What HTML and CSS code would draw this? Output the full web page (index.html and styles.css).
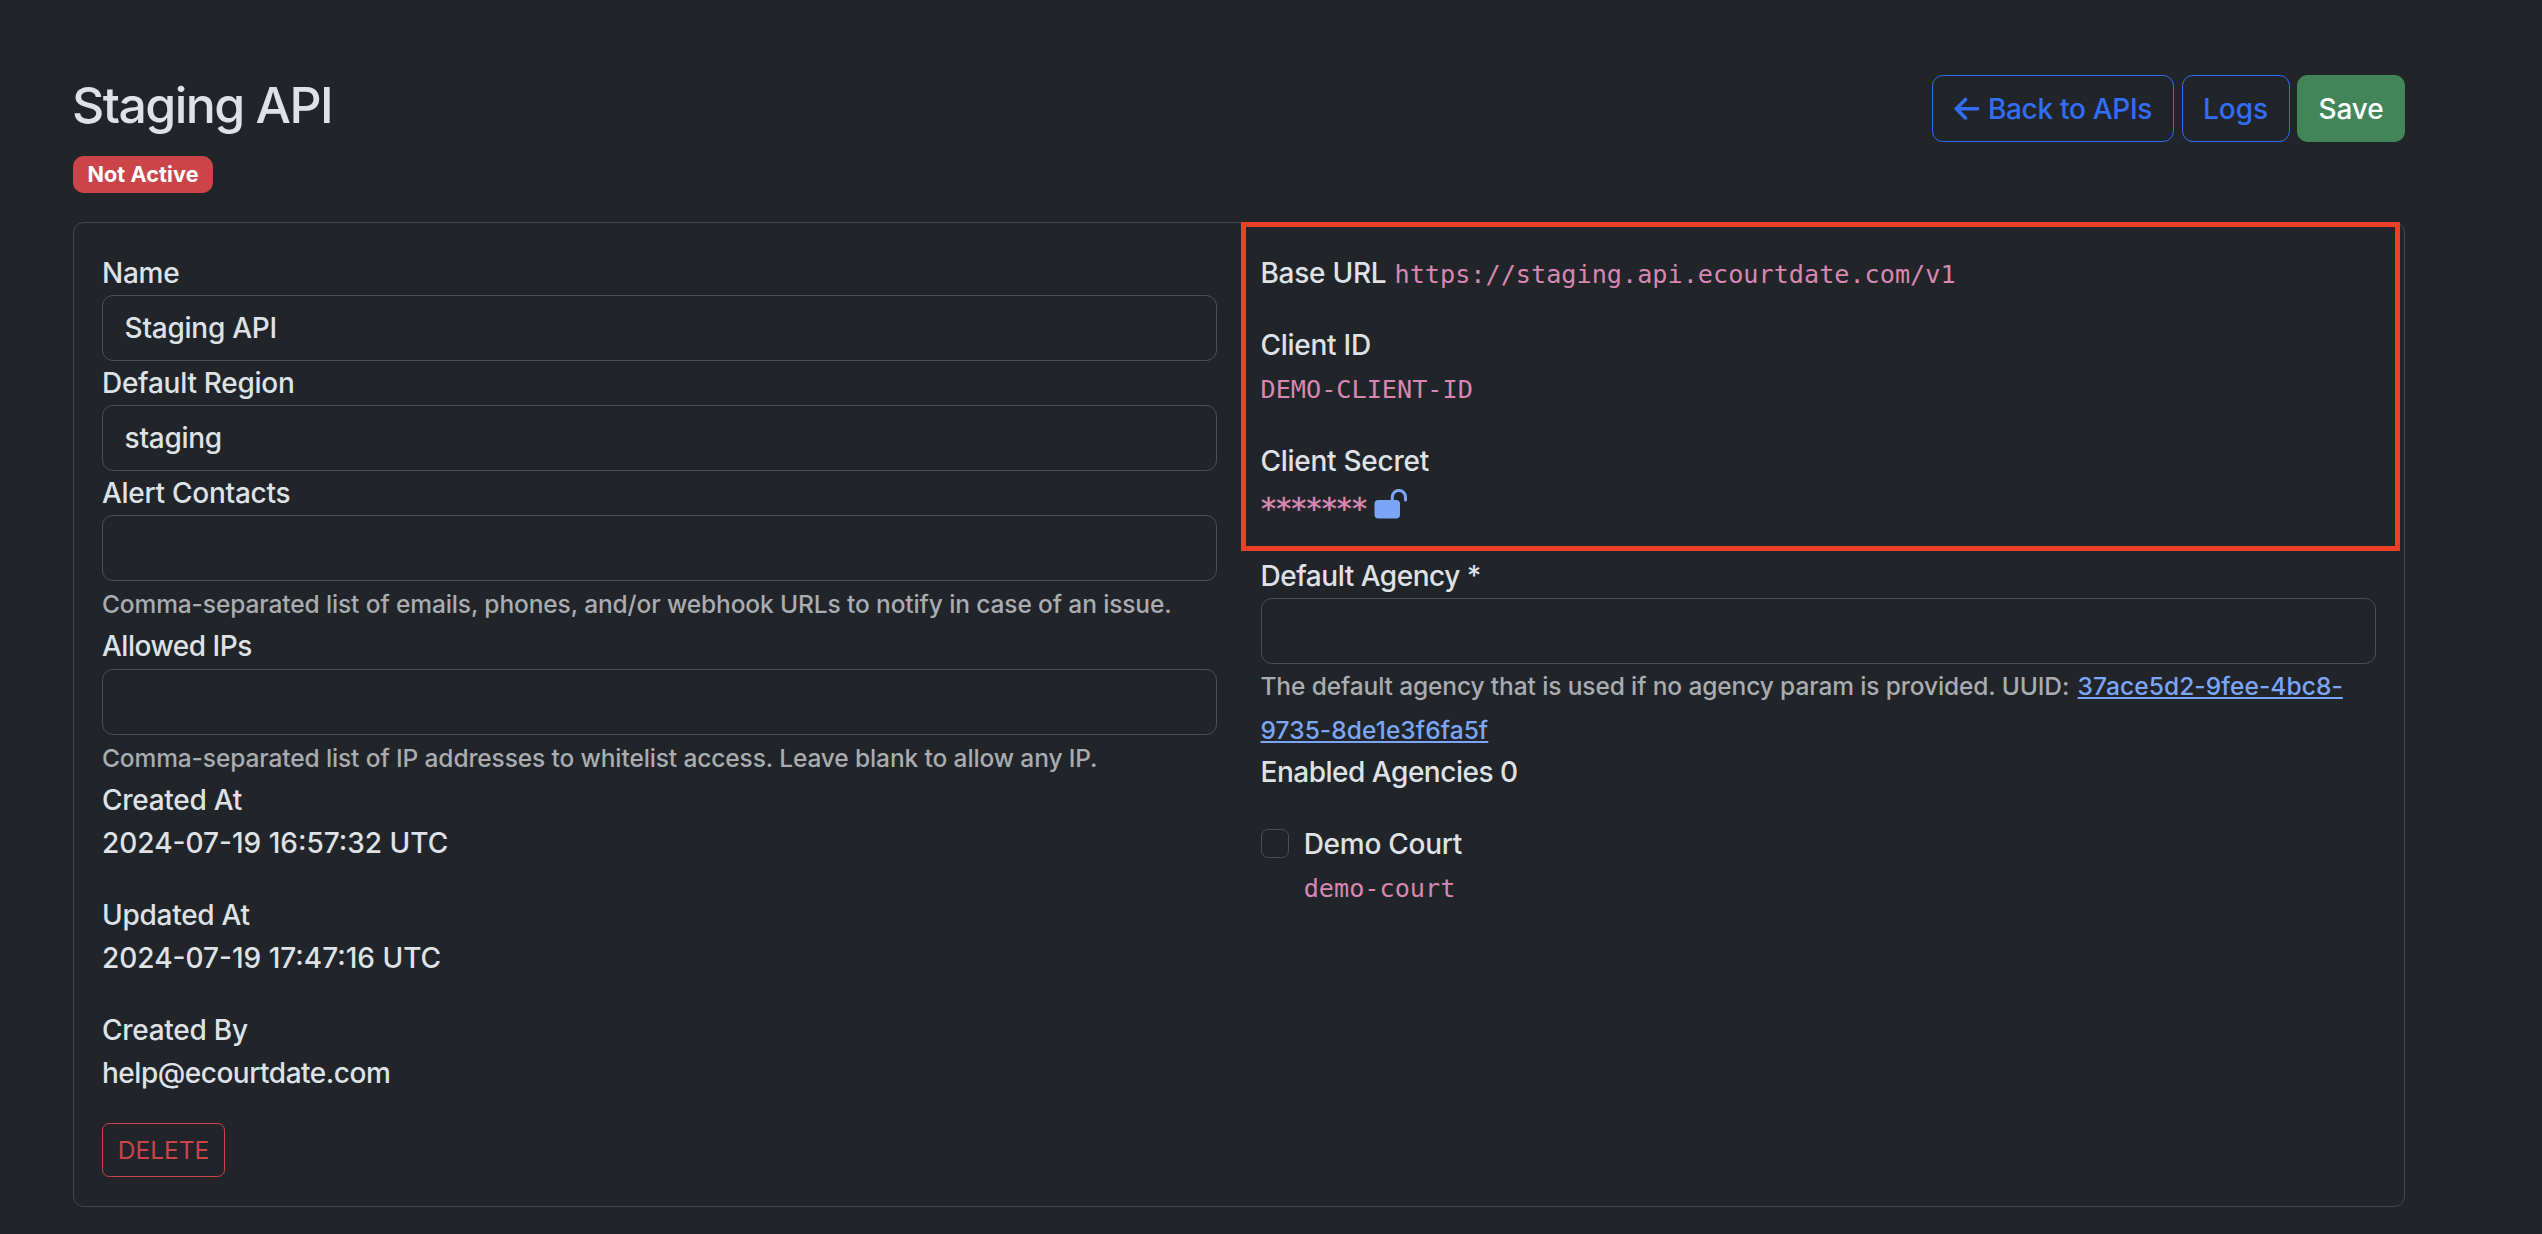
FILE: index.html
```html
<!DOCTYPE html>
<html lang="en">
<head>
<meta charset="utf-8">
<title>Staging API</title>
<link rel="stylesheet" href="styles.css">
</head>
<body>
<main class="page">
  <header class="header">
    <div>
      <h1 class="title">Staging API</h1>
      <span class="badge">Not Active</span>
    </div>
    <nav class="actions">
      <a class="btn btn-outline btn-back"><svg class="arrow" viewBox="0 0 26 24" fill="none" stroke="currentColor" stroke-width="3.6" stroke-linecap="round" stroke-linejoin="round"><path d="M11.5 2.5 2.3 11.7 11.5 20.9M2.5 11.7H23.6"/></svg><span class="tight">Back to APIs</span></a>
      <a class="btn btn-outline">Logs</a>
      <button class="btn btn-save">Save</button>
    </nav>
  </header>
  <section class="card">
    <div class="col col-left">
      <label class="line">Name</label>
      <div class="input">Staging API</div>
      <label class="line">Default Region</label>
      <div class="input">staging</div>
      <label class="line">Alert Contacts</label>
      <div class="input"></div>
      <div class="help">Comma-separated list of emails, phones, and/or webhook URLs to notify in case of an issue.</div>
      <label class="line tighter">Allowed IPs</label>
      <div class="input"></div>
      <div class="help">Comma-separated list of IP addresses to whitelist access. Leave blank to allow any IP.</div>
      <div class="group">
        <div class="line">Created At</div>
        <div class="line date">2024-07-19 16:57:32 UTC</div>
      </div>
      <div class="group">
        <div class="line">Updated At</div>
        <div class="line date">2024-07-19 17:47:16 UTC</div>
      </div>
      <div class="group">
        <div class="line">Created By</div>
        <div class="line tighter">help@ecourtdate.com</div>
      </div>
      <button class="btn-delete">DELETE</button>
    </div>
    <div class="col">
      <div class="group">
        <div class="line">Base URL <code class="url">https://staging.api.ecourtdate.com/v1</code></div>
      </div>
      <div class="group">
        <div class="line">Client ID</div>
        <div class="line"><code>DEMO-CLIENT-ID</code></div>
      </div>
      <div class="group">
        <div class="line nudge">Client Secret</div>
        <div class="line secret"><code class="stars">*******</code><svg class="lock" viewBox="0 0 34 30"><rect x="0.5" y="11" width="25.5" height="18.5" rx="4" fill="currentColor"/><path d="M18.3 12V8a6.6 6.6 0 0 1 13.2 0v3" fill="none" stroke="currentColor" stroke-width="3" stroke-linecap="round"/></svg></div>
      </div>
      <label class="line tighter nudge">Default Agency *</label>
      <div class="input"></div>
      <div class="help">The default agency that is used if no agency param is provided. UUID: <a class="link">37ace5d2-9fee-4bc8-<br>9735-8de1e3f6fa5f</a></div>
      <div class="group">
        <div class="line tighter">Enabled Agencies 0</div>
      </div>
      <div class="check">
        <span class="checkbox"></span>
        <div>
          <div class="line">Demo Court</div>
          <div class="line"><code>demo-court</code></div>
        </div>
      </div>
    </div>
    <div class="highlight"></div>
  </section>
</main>
</body>
</html>
```
FILE: styles.css
```css
* { box-sizing: border-box; }
body {
  margin: 0;
  background: #212529;
  color: #dee2e6;
  font: 450 28px/43.2px Inter, "Liberation Sans", sans-serif;
  letter-spacing: -0.27px;
}
.page { width: 2405px; height: 1234px; padding: 75px 0 0 73px; }
.header { display: flex; justify-content: space-between; align-items: flex-start; height: 147px; }
.title {
  margin: 0 0 20px -1px;
  font-size: 50px; font-weight: 550; line-height: 61px; letter-spacing: -1.55px;
}
.badge {
  display: block; width: 140px; height: 37px;
  border-radius: 10.8px; background: #cb444a; color: #fff;
  font-size: 21.6px; font-weight: 700; line-height: 37px; text-align: center; letter-spacing: 0.1px;
}
.actions { display: flex; gap: 7.5px; }
.btn {
  display: flex; align-items: center; justify-content: center;
  width: 108px; height: 67px; padding: 2px 0 0; border: 1px solid transparent; border-radius: 10.8px;
  font: inherit; letter-spacing: -0.1px; white-space: nowrap;
}
.btn-outline { color: #326df6; border-color: #326df6; }
.btn-back { width: 242px; gap: 8px; }
.tight { letter-spacing: -0.3px; }
.arrow { width: 26px; height: 24px; margin-top: -2px; }
.btn-save { background: #428558; color: #fff; }
.card {
  position: relative; display: flex; gap: 43px; height: 985px; padding: 29px 28px;
  border: 1px solid #43474a; border-radius: 10.8px;
}
.col { flex: 1; min-width: 0; }
.line, .help { display: block; min-height: 43.2px; white-space: nowrap; }
.tighter { letter-spacing: -0.48px; }
.nudge { padding-top: 1px; margin-bottom: -1px; }
.date { letter-spacing: 0; }
.input { height: 66.8px; padding: 11px 21.6px; border: 1px solid #495057; border-radius: 10.8px; }
.col-left .input { width: 1115px; height: 66px; margin-bottom: 0.8px; }
.help { padding-top: 1px; margin-bottom: -1px; color: #a9acb0; font-size: 24.5px; letter-spacing: -0.12px; }
.col-left .help { padding-top: 1.4px; margin-bottom: -1.2px; }
.group { margin-bottom: 28.8px; }
.btn-delete {
  display: block; width: 123px; height: 54px; margin-top: -1px; padding: 0;
  border: 1px solid #cb444a; border-radius: 7.2px; background: none; color: #cb444a;
  font: inherit; font-size: 24.5px; font-weight: 400; letter-spacing: 0; line-height: 52px;
}
code { color: #d887b2; font: 25.2px/1 "DejaVu Sans Mono", monospace; letter-spacing: 0; }
.url { margin-left: 1px; }
.secret { display: flex; align-items: center; height: 43.2px; }
.stars { margin: 9px 0 0 -1px; font-size: 30px; letter-spacing: -2.89px; -webkit-text-stroke: 0.5px #d887b2; }
.lock { width: 34px; height: 30px; margin: 0 0 1px 8px; color: #7ba6f8; }
.link { color: #7ba6f8; text-decoration: underline; letter-spacing: 0.08px; margin-left: 2px; }
.check { display: flex; gap: 14.4px; }
.checkbox { width: 28.8px; height: 28.8px; margin-top: 6.4px; border: 1px solid #495057; border-radius: 7.2px; }
.highlight { position: absolute; left: 1167px; top: -1px; width: 1159px; height: 329px; border: 5px solid #eb4025; }
```
